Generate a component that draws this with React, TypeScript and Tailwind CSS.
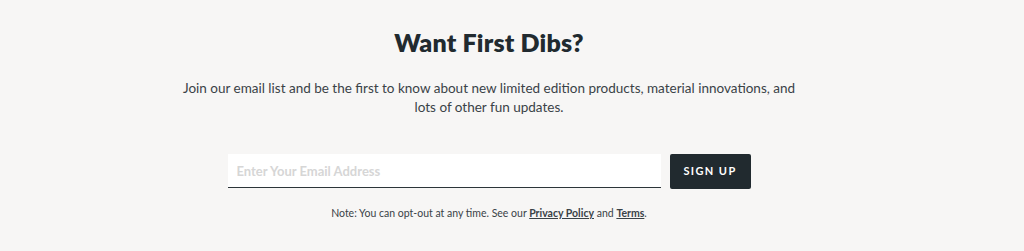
export default function App() {
  return (
    <div className="min-h-[251px] w-full bg-[#f7f6f5] pr-[46px] font-['Lato',sans-serif] text-[#212a2f]">
      <div className="flex flex-col items-center pt-[26px]">
        <h2 className="text-[25px] font-extrabold leading-[32px] tracking-[0.2px]">Want First Dibs?</h2>
        <p className="mt-[21px] w-[616px] text-center text-[13.5px] leading-[19px] text-[#3a4247]">
          Join our email list and be the first to know about new limited edition products, material innovations, and
          lots of other fun updates.
        </p>
        <form className="mt-[37px] flex items-stretch gap-[9px]" onSubmit={(e) => e.preventDefault()}>
          <input
            type="email"
            placeholder="Enter Your Email Address"
            className="h-[34px] w-[433px] border-b-[1.5px] border-[#2c3539] bg-white px-[9px] text-[13px] font-bold text-[#212a2f] outline-none placeholder:text-[#d6d6d6]"
          />
          <button
            type="submit"
            className="h-[35px] w-[81px] rounded-[2px] bg-[#212a2f] text-[11px] font-bold tracking-[1.4px] text-white"
          >
            SIGN UP
          </button>
        </form>
        <p className="mt-[17px] text-[10.5px] text-[#3a4247]">
          Note: You can opt-out at any time. See our{" "}
          <a href="#" className="font-bold underline">
            Privacy Policy
          </a>{" "}
          and{" "}
          <a href="#" className="font-bold underline">
            Terms
          </a>
          .
        </p>
      </div>
    </div>
  );
}
